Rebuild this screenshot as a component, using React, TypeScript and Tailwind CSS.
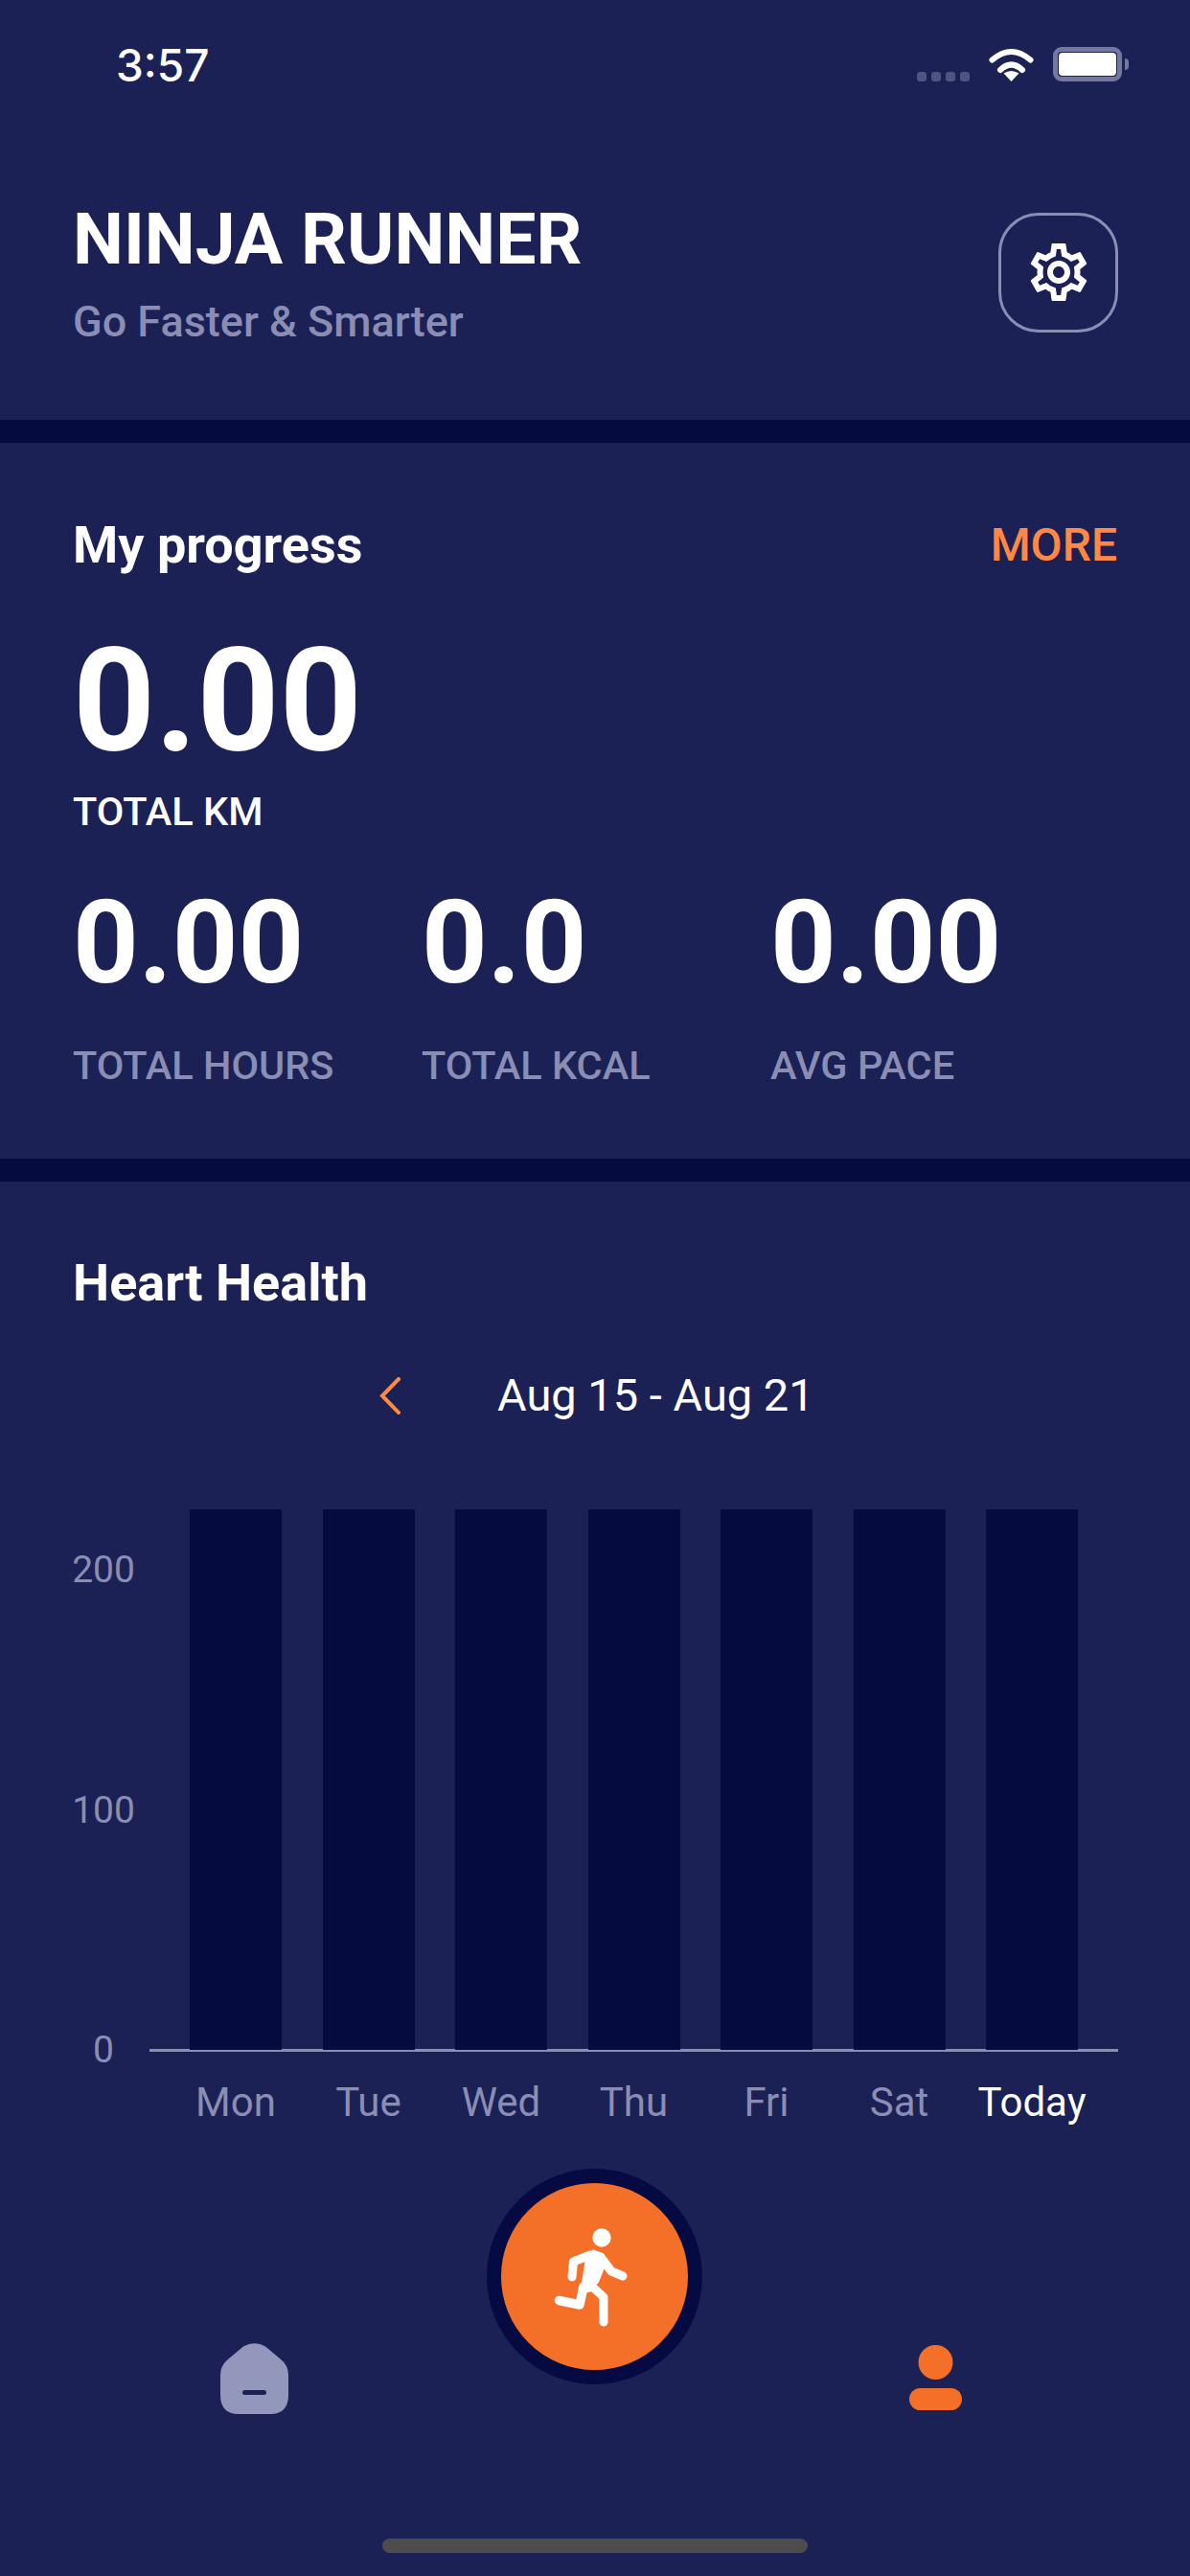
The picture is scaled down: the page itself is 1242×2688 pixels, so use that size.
import { MdOutlineSettings } from 'react-icons/md';

const days = ['Mon', 'Tue', 'Wed', 'Thu', 'Fri', 'Sat', 'Today'];

function WifiIcon() {
  return (
    <svg width="47" height="36" viewBox="0 0 47 36" fill="none" stroke="white" strokeLinecap="round">
      <path d="M3.5 13.5Q23.5 -3.5 43.5 13.5" strokeWidth="6" />
      <path d="M12 24Q23.5 13 35 24" strokeWidth="6" />
      <path d="M23.5 36L15.5 27.5Q23.5 22.5 31.5 27.5Z" fill="white" stroke="none" />
    </svg>
  );
}

function RunnerIcon() {
  return (
    <svg width="85" height="115" viewBox="0 0 85 115" fill="none" stroke="white" strokeLinecap="round" strokeLinejoin="round">
      <circle cx="50" cy="17" r="9.7" fill="white" stroke="none" />
      <path d="M41 31L49 34L52 47L46 62L38 72L29 74L34 42Z" fill="white" stroke="white" strokeWidth="3" />
      <path d="M38 35L20.5 42L19 58" strokeWidth="9" />
      <path d="M49 37L60 52L72 57" strokeWidth="9" />
      <path d="M31 68L27 87L5.5 82.5" strokeWidth="9.5" />
      <path d="M38 66L52 79L52 105" strokeWidth="9" />
    </svg>
  );
}

function HomeIcon() {
  return (
    <svg width="71" height="74" viewBox="0 0 71 74">
      <path d="M24 3.5Q35.5 -3 47 3.5L62 16Q71 23 71 33L71 54Q71 74 52 74L19 74Q0 74 0 54L0 33Q0 23 9 16Z" fill="#9497BC" />
      <rect x="23" y="49" width="25" height="5" rx="2.5" fill="#1B2154" />
    </svg>
  );
}

function PersonIcon() {
  return (
    <svg width="55" height="68" viewBox="0 0 55 68" fill="#F47028">
      <circle cx="27.5" cy="18" r="18" />
      <rect x="0" y="45" width="55" height="23" rx="11.5" />
    </svg>
  );
}

function Stat({ value, label }: { value: string; label: string }) {
  return (
    <div>
      <div className="text-[120px] leading-[120px] font-bold text-white">{value}</div>
      <div className="mt-[45px] text-[41.5px] leading-[46px] font-medium text-[#8A8EB4]">{label}</div>
    </div>
  );
}

export default function App() {
  return (
    <div className="h-[2688px] w-[1242px] overflow-hidden bg-[#1B2154] font-['Roboto',sans-serif]">
      {/* Header */}
      <header className="h-[438px]">
        <div className="flex h-[92px] items-end pl-[121px] pr-[64px]">
          <span className="font-['Inter',sans-serif] text-[46px] leading-[48px] font-medium text-white">3:57</span>
          <div className="mb-[7px] ml-auto flex items-end">
            <div className="flex gap-[5px]">
              <span className="h-[10px] w-[10px] rounded-[3px] bg-[#50547F]" />
              <span className="h-[10px] w-[10px] rounded-[3px] bg-[#50547F]" />
              <span className="h-[10px] w-[10px] rounded-[3px] bg-[#50547F]" />
              <span className="h-[10px] w-[10px] rounded-[3px] bg-[#50547F]" />
            </div>
            <div className="ml-[20px] flex">
              <WifiIcon />
            </div>
            <div className="ml-[20px] flex items-center">
              <div className="h-[36px] w-[72px] rounded-[9px] border-[5px] border-[#7478A0] p-[1px]">
                <div className="h-full w-full rounded-[4px] bg-white" />
              </div>
              <div className="ml-[3px] h-[12px] w-[4px] rounded-r-[4px] bg-[#7478A0]" />
            </div>
          </div>
        </div>
        <div className="mt-[115px] flex items-center justify-between pl-[76px] pr-[75px]">
          <div>
            <h1 className="text-[75px] leading-[84px] font-bold text-white">NINJA RUNNER</h1>
            <p className="mt-[20px] text-[45px] leading-[50px] font-medium text-[#8A8EB4]">Go Faster &amp; Smarter</p>
          </div>
          <button className="flex h-[125px] w-[125px] items-center justify-center rounded-[42px] border-[3px] border-[#8A8EB4]">
            <MdOutlineSettings size={72} color="white" />
          </button>
        </div>
      </header>

      <div className="h-[24px] bg-[#050A3F]" />

      {/* My progress */}
      <section className="h-[747px] px-[76px] pt-[79px]">
        <div className="flex items-center justify-between">
          <h2 className="text-[54px] leading-[56px] font-bold text-white">My progress</h2>
          <span className="text-[48px] leading-[56px] font-medium text-[#FF8845]">MORE</span>
        </div>
        <div className="mt-[60px] text-[150px] leading-[150px] font-bold text-white">0.00</div>
        <div className="mt-[17px] text-[41.5px] leading-[46px] font-medium text-white">TOTAL KM</div>
        <div className="mt-[54px] grid grid-cols-[364px_364px_1fr]">
          <Stat value="0.00" label="TOTAL HOURS" />
          <Stat value="0.0" label="TOTAL KCAL" />
          <Stat value="0.00" label="AVG PACE" />
        </div>
      </section>

      <div className="h-[24px] bg-[#050A3F]" />

      {/* Heart Health */}
      <section className="pt-[78px]">
        <h2 className="pl-[76px] text-[54px] leading-[56px] font-bold text-white">Heart Health</h2>
        <div className="mt-[64px] flex h-[50px] items-center pl-[396px]">
          <svg width="22" height="39" viewBox="0 0 22 39" fill="none" stroke="#FF8845" strokeWidth="4" strokeLinecap="square">
            <path d="M20 2L3 19.5L20 37" />
          </svg>
          <span className="ml-[101px] text-[47px] leading-[50px] text-white">Aug 15 - Aug 21</span>
        </div>

        <div className="mt-[94px] flex pl-[76px]">
          <div className="mt-[43px] flex h-[541px] w-[64px] flex-col items-center justify-between text-[39px] leading-[40px] text-[#8A8EB4]">
            <span>200</span>
            <span>100</span>
            <span>0</span>
          </div>
          <div className="ml-[16px] w-[1011px]">
            <div className="flex h-[566px] justify-between border-b-[3px] border-[#8A8EB4] px-[42px]">
              {days.map((day) => (
                <div key={day} className="mb-[-1px] w-[96px] bg-[#060B3F]" />
              ))}
            </div>
            <div className="mt-[28px] flex justify-between px-[42px]">
              {days.map((day) => (
                <span
                  key={day}
                  className={
                    day === 'Today'
                      ? 'flex w-[96px] justify-center whitespace-nowrap text-[42px] leading-[50px] text-white'
                      : 'flex w-[96px] justify-center whitespace-nowrap text-[42px] leading-[50px] text-[#8A8EB4]'
                  }
                >
                  {day}
                </span>
              ))}
            </div>
          </div>
        </div>

        {/* Bottom nav */}
        <nav className="flex h-[300px] items-start pl-[230px]">
          <div className="mt-[226px]">
            <HomeIcon />
          </div>
          <button className="ml-[207px] mt-[44px] flex h-[225px] w-[225px] items-center justify-center rounded-full border-[15px] border-[#060A42] bg-[#F47028]">
            <RunnerIcon />
          </button>
          <div className="ml-[216px] mt-[228px]">
            <PersonIcon />
          </div>
        </nav>
        <div className="mx-auto mt-[130px] h-[15px] w-[444px] rounded-full bg-[#4D4D4D]" />
      </section>
    </div>
  );
}
